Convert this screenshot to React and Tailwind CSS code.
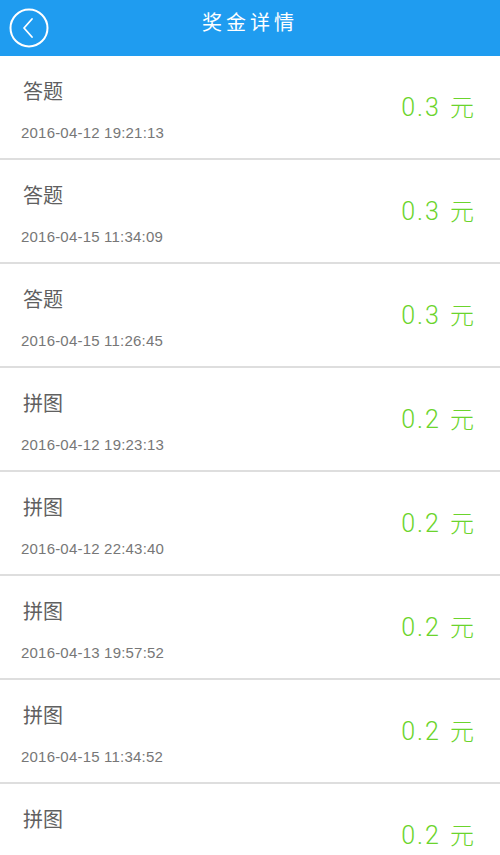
const records = [
  { title: '答题', time: '2016-04-12 19:21:13', amount: '0.3' },
  { title: '答题', time: '2016-04-15 11:34:09', amount: '0.3' },
  { title: '答题', time: '2016-04-15 11:26:45', amount: '0.3' },
  { title: '拼图', time: '2016-04-12 19:23:13', amount: '0.2' },
  { title: '拼图', time: '2016-04-12 22:43:40', amount: '0.2' },
  { title: '拼图', time: '2016-04-13 19:57:52', amount: '0.2' },
  { title: '拼图', time: '2016-04-15 11:34:52', amount: '0.2' },
  { title: '拼图', time: null, amount: '0.2' },
];

export default function App() {
  return (
    <div
      className="w-[500px] h-[855px] overflow-hidden bg-white"
      style={{ fontFamily: '"Noto Sans", "Noto Sans CJK SC", sans-serif' }}
    >
      {/* Header */}
      <header className="relative h-[56px] bg-[#1f9cf0] flex items-center justify-center">
        <button className="absolute left-[9px] top-[8px] w-[40px] h-[40px]">
          <svg viewBox="0 0 40 40" className="w-[40px] h-[40px]" fill="none" stroke="white">
            <circle cx="20" cy="20" r="18.5" strokeWidth="2" />
            <path d="M23 11 L15 20 L23 29" strokeWidth="1.8" strokeLinecap="round" strokeLinejoin="round" />
          </svg>
        </button>
        <h1 className="text-white text-[20px] tracking-[4px] leading-none -mt-[10px]">奖金详情</h1>
      </header>

      {/* List */}
      <ul>
        {records.map((r, i) => (
          <li
            key={i}
            className="h-[104px] border-b-2 border-[#dedede] flex items-center justify-between pl-[21px] pr-[26px]"
          >
            <div className="self-start pt-[23px]">
              <div className="text-[20px] leading-[26px] text-[#606060] pl-[2px]">{r.title}</div>
              {r.time && (
                <div
                  className="mt-[18px] text-[15px] leading-[20px] text-[#777] tracking-[0.2px]"
                  style={{ fontFamily: '"Liberation Sans", Arial, sans-serif' }}
                >
                  {r.time}
                </div>
              )}
            </div>
            <div
              className="text-[25px] text-[#6bd42c] font-light -mb-[2px]"
              style={{ fontFamily: 'Roboto, "Noto Sans CJK SC", sans-serif' }}
            >
              <span className="tracking-[2px]">{r.amount}</span> <span className="text-[24px] ml-[3px]">元</span>
            </div>
          </li>
        ))}
      </ul>
    </div>
  );
}
